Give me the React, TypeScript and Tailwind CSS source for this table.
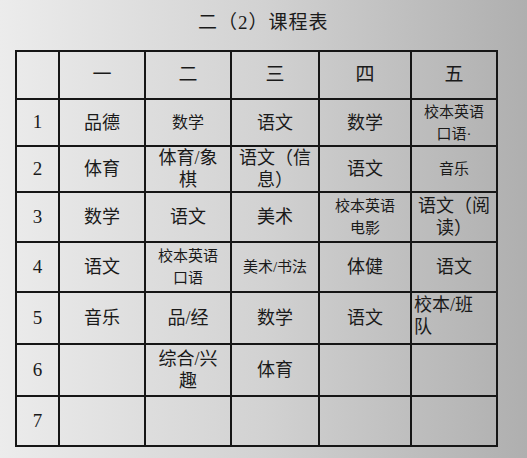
import React from "react";

type Cell = { lines: string[]; align?: "left" | "center"; top?: boolean; size?: string };

const header = ["一", "二", "三", "四", "五"];

const rows: Cell[][] = [
  [
    { lines: ["品德"] },
    { lines: ["数学"], size: "text-[16px]" },
    { lines: ["语文"] },
    { lines: ["数学"] },
    { lines: ["校本英语", "口语·"], size: "text-[15px]" },
  ],
  [
    { lines: ["体育"] },
    { lines: ["体育/象", "棋"] },
    { lines: ["语文（信", "息）"] },
    { lines: ["语文"] },
    { lines: ["音乐"], size: "text-[15px]" },
  ],
  [
    { lines: ["数学"] },
    { lines: ["语文"] },
    { lines: ["美术"] },
    { lines: ["校本英语", "电影"], size: "text-[15px]" },
    { lines: ["语文（阅", "读）"] },
  ],
  [
    { lines: ["语文"] },
    { lines: ["校本英语", "口语"], size: "text-[15px]" },
    { lines: ["美术/书法"], size: "text-[15px]" },
    { lines: ["体健"] },
    { lines: ["语文"] },
  ],
  [
    { lines: ["音乐"] },
    { lines: ["品/经"] },
    { lines: ["数学"] },
    { lines: ["语文"] },
    { lines: ["校本/班", "队"], align: "left", top: true },
  ],
  [
    { lines: [] },
    { lines: ["综合/兴", "趣"] },
    { lines: ["体育"] },
    { lines: [] },
    { lines: [] },
  ],
  [{ lines: [] }, { lines: [] }, { lines: [] }, { lines: [] }, { lines: [] }],
];

const rowHeights = ["h-[47px]", "h-[46px]", "h-[50px]", "h-[50px]", "h-[52px]", "h-[52px]", "h-[50px]"];

export default function App() {
  return (
    <div
      className="w-[527px] h-[458px] overflow-hidden bg-linear-to-r from-[#ececec] via-[#d2d2d2] to-[#afafaf] text-[#1a1a1a]"
      style={{ fontFamily: '"Liberation Serif", "Noto Sans CJK SC", serif' }}
    >
      <div className="pt-[10px] pl-[198px] text-[19px] leading-[26px] tracking-[1px]">
        二（2）课程表
      </div>
      <table className="ml-[15px] mt-[14px] border-collapse border-2 border-[#161616]">
        <thead>
          <tr className="h-[48px]">
            <th className="w-[43px] border-2 border-[#161616] font-normal"></th>
            {header.map((h, i) => (
              <th
                key={h}
                className={`border-2 border-[#161616] font-normal text-[19px] ${
                  i === 3 ? "w-[92px]" : i === 2 ? "w-[88px]" : "w-[86px]"
                }`}
              >
                {h}
              </th>
            ))}
          </tr>
        </thead>
        <tbody>
          {rows.map((r, ri) => (
            <tr key={ri} className={rowHeights[ri]}>
              <td className="border-2 border-[#161616] text-center text-[19px]">{ri + 1}</td>
              {r.map((c, ci) => (
                <td
                  key={ci}
                  className={`border-2 border-[#161616] px-[2px] leading-[22px] ${
                    c.size ?? "text-[18px]"
                  } ${c.align === "left" ? "text-left" : "text-center"} ${
                    c.top ? "align-top pt-[1px]" : "align-middle"
                  }`}
                >
                  {c.lines.map((l, li) => (
                    <div key={li}>{l}</div>
                  ))}
                </td>
              ))}
            </tr>
          ))}
        </tbody>
      </table>
    </div>
  );
}
